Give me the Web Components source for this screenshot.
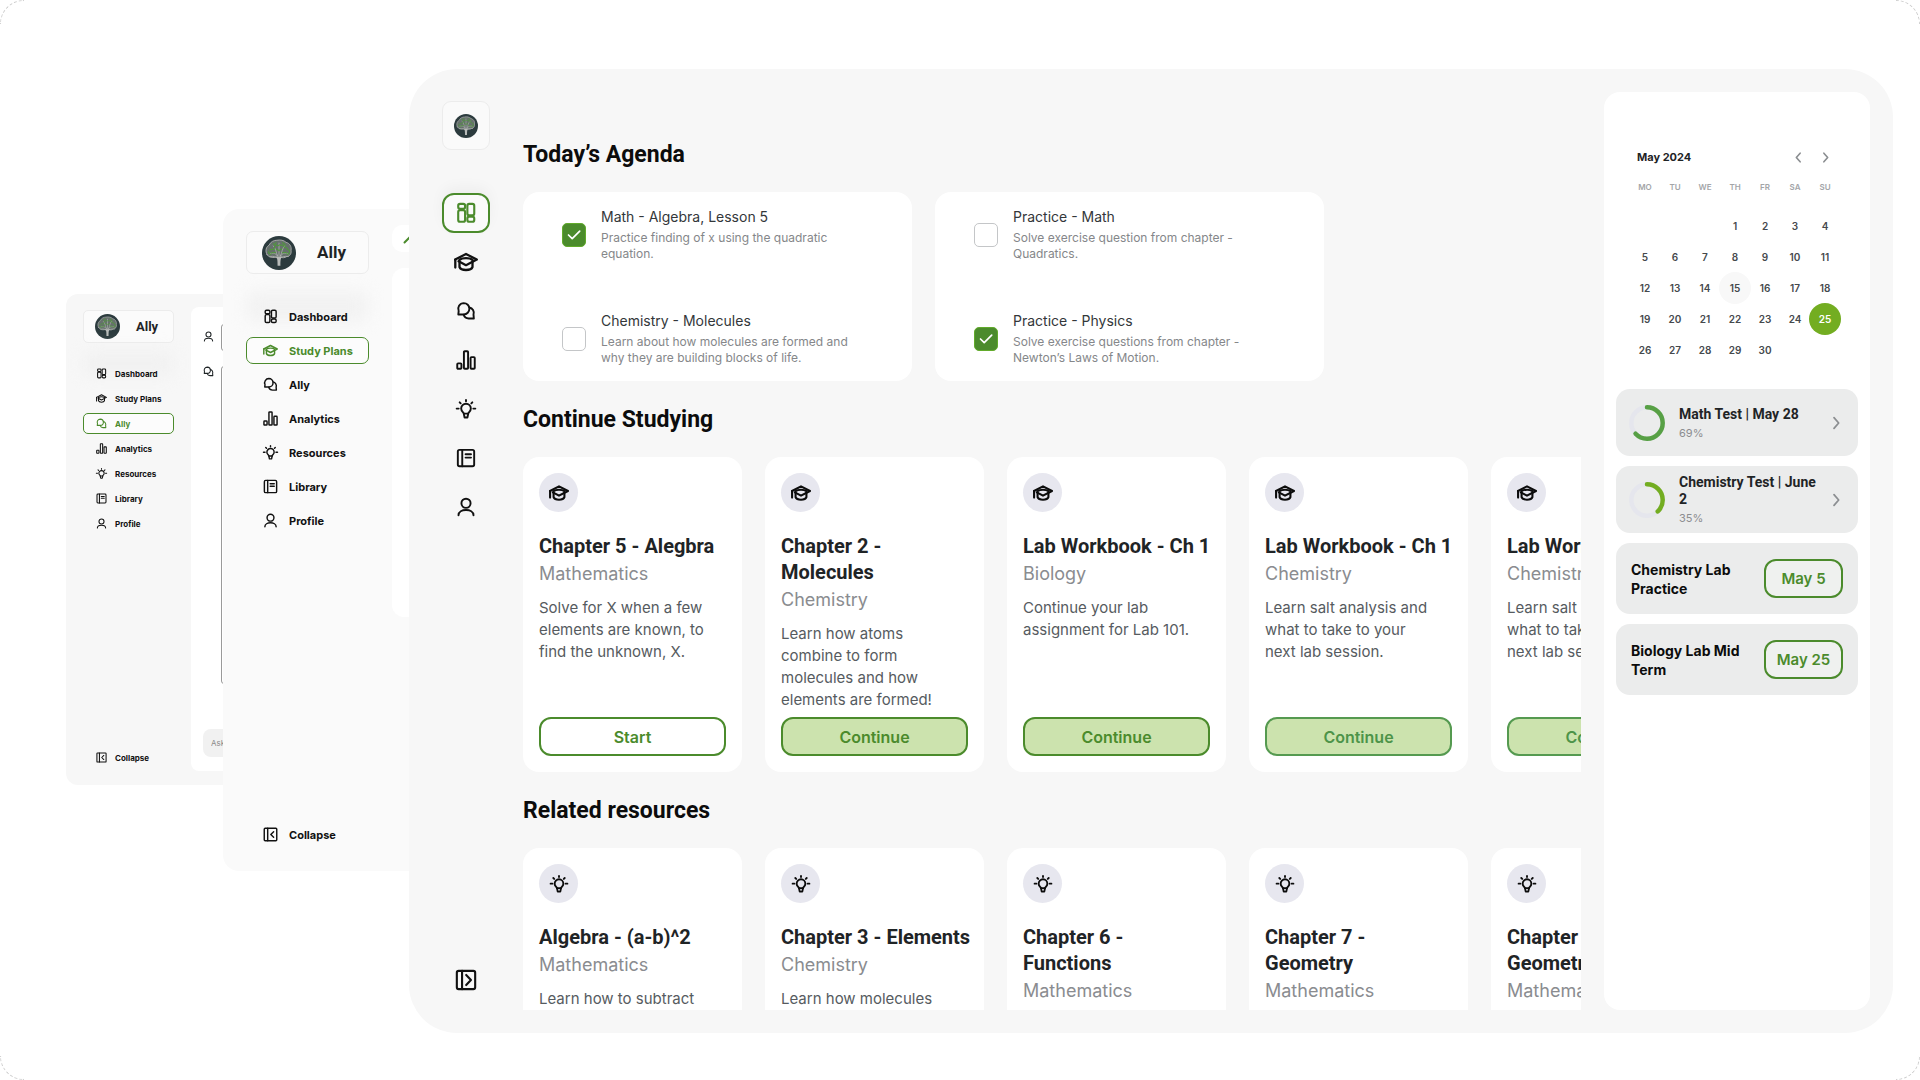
<!DOCTYPE html>
<html lang="en">
<head>
<meta charset="utf-8">
<title>Ally – Study dashboard</title>
<style>
  :root {
    --green: #4b8b2c;
    --lime: #73ad21;
    --ink: #1f2426;
    --body: #565b60;
    --muted: #8a8c90;
    --surface: #f7f7f7;
    --display: Roboto, "Liberation Sans", sans-serif;
  }
  * { box-sizing: border-box; }
  html, body { margin: 0; height: 100%; background: #fff; }
  body { font-family: Inter, "Liberation Sans", sans-serif; color: var(--ink); }
</style>
</head>
<body>
<ally-stage>
  <chat-window slot="back"></chat-window>
  <plans-window slot="middle"></plans-window>
  <dashboard-window slot="front">
    <ally-section heading="Today’s Agenda">
      <agenda-card>
        <agenda-item checked><span slot="title">Math - Algebra, Lesson 5</span>Practice finding of x using the quadratic<br>equation.</agenda-item>
        <agenda-item><span slot="title">Chemistry - Molecules</span>Learn about how molecules are formed and<br>why they are building blocks of life.</agenda-item>
      </agenda-card>
      <agenda-card>
        <agenda-item><span slot="title">Practice - Math</span>Solve exercise question from chapter -<br>Quadratics.</agenda-item>
        <agenda-item checked><span slot="title">Practice - Physics</span>Solve exercise questions from chapter -<br>Newton’s Laws of Motion.</agenda-item>
      </agenda-card>
    </ally-section>
    <ally-section heading="Continue Studying">
      <study-card icon="cap" action="Start" plain><span slot="title">Chapter 5 - Alegbra</span><span slot="subject">Mathematics</span>Solve for X when a few<br>elements are known, to<br>find the unknown, X.</study-card>
      <study-card icon="cap" action="Continue"><span slot="title">Chapter 2 -<br>Molecules</span><span slot="subject">Chemistry</span>Learn how atoms<br>combine to form<br>molecules and how<br>elements are formed!</study-card>
      <study-card icon="cap" action="Continue"><span slot="title">Lab Workbook - Ch 1</span><span slot="subject">Biology</span>Continue your lab<br>assignment for Lab 101.</study-card>
      <study-card icon="cap" action="Continue" soft><span slot="title">Lab Workbook - Ch 1</span><span slot="subject">Chemistry</span>Learn salt analysis and<br>what to take to your<br>next lab session.</study-card>
      <study-card icon="cap" action="Continue" soft><span slot="title">Lab Workbook - Ch 1</span><span slot="subject">Chemistry</span>Learn salt analysis and<br>what to take to your<br>next lab session.</study-card>
    </ally-section>
    <ally-section heading="Related resources">
      <study-card icon="bulb"><span slot="title">Algebra - (a-b)^2</span><span slot="subject">Mathematics</span>Learn how to subtract</study-card>
      <study-card icon="bulb"><span slot="title">Chapter 3 - Elements</span><span slot="subject">Chemistry</span>Learn how molecules</study-card>
      <study-card icon="bulb"><span slot="title">Chapter 6 -<br>Functions</span><span slot="subject">Mathematics</span></study-card>
      <study-card icon="bulb"><span slot="title">Chapter 7 -<br>Geometry</span><span slot="subject">Mathematics</span></study-card>
      <study-card icon="bulb"><span slot="title">Chapter 7 -<br>Geometry</span><span slot="subject">Mathematics</span></study-card>
    </ally-section>
    <month-calendar slot="aside" month="May 2024" offset="3" days="30" today="15" selected="25"></month-calendar>
    <test-card slot="aside" percent="69%" sweep="63" tone="#57a045">Math Test | May 28</test-card>
    <test-card slot="aside" percent="35%" sweep="38" tone="#73ad21">Chemistry Test | June<br>2</test-card>
    <lab-card slot="aside" date="May 5">Chemistry Lab<br>Practice</lab-card>
    <lab-card slot="aside" date="May 25">Biology Lab Mid<br>Term</lab-card>
  </dashboard-window>
</ally-stage>

<script>
const ICONS = {
  grid: '<rect x="3.500" y="2" width="7.500" height="5.500" rx="2"/><rect x="3.500" y="9" width="7.500" height="12.500" rx="2"/><rect x="13.500" y="2" width="7.500" height="12.500" rx="2"/><rect x="13.500" y="16" width="7.500" height="5.500" rx="2"/>',
  cap: '<path d="M1.200 9.600 12 4l10.800 5.600L12 15.200 4.600 11.300"/><path d="M5.500 9.800c3-2.200 10-2.200 13 0V17c-1.500 4-11.500 4-13 0z"/><path d="M1.300 9.600V17.500"/>',
  chat: '<path d="M9.300 2.500a6.800 6.800 0 0 1 0 13.600H2.800l.4-4A6.800 6.800 0 0 1 9.300 2.500z"/><path d="M16 7.800a6.500 6.500 0 0 1 5 8.500l.4 4.700h-6.200a6.500 6.500 0 0 1-6-4.500"/>',
  bars: '<rect x="1.500" y="16" width="5" height="6.500" rx="1"/><rect x="9.500" y="1.500" width="5" height="21" rx="1"/><rect x="17.500" y="8.500" width="5" height="14" rx="1"/>',
  bulb: '<path d="M9.300 17.500c0-1.500-3.100-2.600-3.100-6a5.800 5.800 0 0 1 11.600 0c0 3.400-3.100 4.500-3.100 6z"/><path d="M9.300 17.500l1 4.700h3.400l1-4.700M12 1.200v1.600M4.400 4l1.200 1.200M19.600 4l-1.200 1.200M.8 11.500h2.400M20.800 11.500h2.400"/>',
  book: '<rect x="2.200" y="2.200" width="19.600" height="19.600" rx="2"/><path d="M7.500 2.200v19.600M11.500 7.500h6.500M11.500 11.500h6.500"/>',
  user: '<circle cx="12" cy="7.500" r="5.500"/><path d="M3 22c0-8.500 18-8.500 18 0"/>',
  fold: '<rect x="2" y="2" width="20" height="20" rx="1.500"/><path d="M7.500 2v20M17 7.500 12.500 12l4.500 4.500"/>',
  unfold: '<rect x="2" y="2" width="20" height="20" rx="2"/><path d="M7.700 2v20M12.200 6.500l5.200 5.500-5.200 5.500"/>',
  left: '<path d="M15 4 8 12l7 8"/>',
  right: '<path d="M9 4l7 8-7 8"/>'
};

/* Base class: fills an open shadow root with a component's markup and styles. */
class AllyElement extends HTMLElement {
  connectedCallback() {
    if (this.shadowRoot) return;
    const t = document.createElement('template');
    t.innerHTML = '<style>*{box-sizing:border-box}' + this.styles() + '</style>' + this.markup();
    this.attachShadow({ mode: 'open' }).append(t.content.cloneNode(true));
  }
  attr(n, d = '') { return this.getAttribute(n) ?? d; }
  styles() { return ':host{display:block}'; }
  markup() { return '<slot></slot>'; }
}

customElements.define('ally-icon', class extends AllyElement {
  styles() { return ':host{display:block;flex:none;width:24px;height:24px}svg{display:block;width:100%;height:100%;overflow:visible}'; }
  markup() {
    return `<svg viewBox="0 0 24 24" fill="none" stroke="currentColor" stroke-width="${this.attr('weight', '2.300')}" stroke-linecap="round" stroke-linejoin="round" aria-hidden="true">${ICONS[this.attr('name')]}</svg>`;
  }
});

/* Tree-shaped brain in a dark disc. */
customElements.define('ally-logo', class extends AllyElement {
  styles() { return ':host{display:block;flex:none}svg{display:block;width:100%;height:100%}'; }
  markup() {
    return `<svg viewBox="0 0 48 48" role="img" aria-label="Ally logo">
      <circle cx="24" cy="24" r="24" fill="#2c3b3e"/>
      <g fill="none" stroke-linecap="round" stroke-linejoin="round">
        <path d="M7 26c-3-5-1-11 3-13 2-5 7-7 11-7 5-1 10 0 13 3 5 1 8 6 7 11 1 5-2 9-6 9-3 2-6 2-8 1-3 1-6 1-8 0-5 1-10 0-12-4z" fill="#66706d" stroke="#a6a9a7" stroke-width="1.400"/>
        <path d="M24 30V10M23 30c-3-6-8-7-12-5M25 30c3-6 8-7 12-5M22 28c-3-5-2-11-6-14M26 28c3-5 2-11 6-14M20 30c-4-2-7-1-9-1M28 30c4-2 7-1 9-1" stroke="#b2b5b2" stroke-width="1.100"/>
        <path d="M11 20c2-3 4 1 6-2s-1-4 2-5 3 2 5 0 3 1 5 0 1 4 4 3 2 4 5 4M13 24c2-2 4 1 6-1M29 23c2 2 4-1 6 1M20 18c1 2 3 1 4 3 1-2 3-1 4-3M16 11c1 2 3 0 4-2M29 9c1 2 3 2 4 4M9 22c0 2 1 3 3 4M39 21c0 2-1 4-3 5" stroke="#4f9a3a" stroke-width="1.500"/>
      </g>
      <path d="M19 29c3 2 3 6 3 13h4c0-7 0-11 3-13-2 0-3 1-5 1s-3-1-5-1z" fill="#b9bcba"/>
    </svg>`;
  }
});

customElements.define('ally-stage', class extends AllyElement {
  styles() {
    return `:host{display:block;position:relative;height:100%;overflow:hidden;background:#fff}
    .edge{position:absolute;inset:0;display:grid;grid-template-columns:24px 24px;grid-template-rows:24px 24px;justify-content:space-between;align-content:space-between}
    i{border:0 dashed #cfcfcf}
    i:nth-child(1){border-width:1px 0 0 1px;border-top-left-radius:24px}
    i:nth-child(2){border-width:1px 1px 0 0;border-top-right-radius:24px}
    i:nth-child(3){border-width:0 0 1px 1px;border-bottom-left-radius:24px}
    i:nth-child(4){border-width:0 1px 1px 0;border-bottom-right-radius:24px}
    ::slotted(*){position:absolute}
    ::slotted([slot=back]){left:66px;top:294px;width:360px;height:491px}
    ::slotted([slot=middle]){left:223px;top:209px;width:240px;height:662px}
    ::slotted([slot=front]){left:409px;right:27px;top:69px;bottom:47px}`;
  }
  markup() { return '<div class="edge"><i></i><i></i><i></i><i></i></div><slot name="back"></slot><slot name="middle"></slot><slot name="front"></slot>'; }
});

/* Expanded navigation column; sizes come from the window that holds it. */
customElements.define('nav-column', class extends AllyElement {
  styles() {
    return `:host{display:flex;flex-direction:column;width:var(--nav-w);flex:none}
    .brand{display:flex;align-items:center;height:var(--brand-h);border:1px solid #ececec;border-radius:var(--r);background:#fbfbfb;padding-left:var(--brand-pad);gap:var(--brand-gap);font:700 var(--brand-fs)/1 var(--display);margin-bottom:var(--brand-mb);color:var(--ink)}
    ally-logo{width:var(--logo);height:var(--logo)}
    nav{display:flex;flex-direction:column;gap:var(--gap);flex:1;position:relative;z-index:0}
    a{display:flex;align-items:center;position:relative;height:var(--item-h);gap:var(--item-gap);padding-left:var(--item-pad);border:1px solid transparent;border-radius:var(--r);font-size:var(--fs);font-weight:700;color:#111;text-decoration:none}
    a:first-child::before{content:"";position:absolute;inset:-12px 0 8px;background:#ececec;opacity:.6;filter:blur(9px);z-index:-1}
    a.on{color:var(--green);border-color:var(--green);background:#fcfcfc}
    a:last-child{margin-top:auto}
    ally-icon{width:var(--icon);height:var(--icon)}`;
  }
  markup() {
    const items = [['grid', 'Dashboard'], ['cap', 'Study Plans'], ['chat', 'Ally'], ['bars', 'Analytics'], ['bulb', 'Resources'], ['book', 'Library'], ['user', 'Profile'], ['fold', 'Collapse']];
    return `<div class="brand"><ally-logo></ally-logo><span>Ally</span></div><nav>` +
      items.map(([i, l]) => `<a href="#${i}"${l === this.attr('active') ? ' class="on" aria-current="page"' : ''}><ally-icon name="${i}"></ally-icon><span>${l}</span></a>`).join('') + '</nav>';
  }
});

customElements.define('chat-window', class extends AllyElement {
  styles() {
    return `:host{display:flex;gap:17px;padding:13px 13px 14px 17px;border-radius:12px;background:var(--surface)}
    nav-column{margin:3px 0;--nav-w:91px;--brand-h:33px;--brand-pad:11px;--brand-gap:16px;--brand-fs:13px;--brand-mb:20px;--logo:25px;--r:5px;--gap:4px;--item-h:21px;--item-gap:8px;--item-pad:12px;--fs:8px;--icon:11px}
    main{flex:1;display:flex;flex-direction:column;background:#fff;border-radius:8px;padding:17px 0 14px 12px}
    .row{display:flex;gap:7px}
    .row+.row{margin-top:15px}
    ally-icon{width:11px;height:11px;margin-top:7px}
    .row+.row ally-icon{margin-top:0}
    .msg{flex:1;height:27px;border:1px solid #9a9a9a;border-radius:3px}
    .msg.long{height:318px}
    input{margin-top:auto;height:28px;border:0;border-radius:8px;background:#f1f1f1;padding:0 8px;font:8px Inter,sans-serif;color:#8a8a8a;width:100%}
    input::placeholder{color:#8a8a8a;opacity:1}`;
  }
  markup() {
    return `<nav-column active="Ally"></nav-column><main>
      <div class="row"><ally-icon name="user"></ally-icon><div class="msg"></div></div>
      <div class="row"><ally-icon name="chat"></ally-icon><div class="msg long"></div></div>
      <input type="text" aria-label="Ask Ally" placeholder="Ask"></main>`;
  }
});

customElements.define('plans-window', class extends AllyElement {
  styles() {
    return `:host{display:flex;gap:23px;padding:16px 0 23px 23px;border-radius:16px;background:#fafafa}
    nav-column{margin-top:6px;--nav-w:123px;--brand-h:43px;--brand-pad:15px;--brand-gap:21px;--brand-fs:17px;--brand-mb:29px;--logo:34px;--r:7px;--gap:7px;--item-h:27px;--item-gap:11px;--item-pad:16px;--fs:11px;--icon:15px}
    main{flex:1;display:flex;flex-direction:column;gap:16px}
    .tab{height:27px;border-radius:10px;background:#fff;padding:11px;color:var(--green)}
    .tab svg{display:block;width:12px;height:8px}
    .pane{height:349px;border-radius:12px;background:#fff}`;
  }
  markup() {
    return `<nav-column active="Study Plans"></nav-column><main><div class="tab"><svg viewBox="0 0 12 8" fill="none" stroke="currentColor" stroke-width="2" stroke-linecap="round"><path d="M1.500 6.500 6 2l4.500 4.500"/></svg></div><div class="pane"></div></main>`;
  }
});

customElements.define('dashboard-window', class extends AllyElement {
  styles() {
    return `:host{display:flex;padding:23px 23px 23px 33px;border-radius:48px;background:var(--surface)}
    .rail{display:flex;flex-direction:column;width:48px;flex:none;padding:9px 0 10px}
    .brand{display:grid;place-items:center;height:49px;border:1px solid #ececec;border-radius:9px;background:#fafafa;margin-bottom:43px}
    ally-logo{width:24px;height:24px}
    nav{display:flex;flex-direction:column;gap:9px;flex:1}
    a{display:grid;place-items:center;height:40px;color:#111;border-radius:12px}
    a.on{color:var(--green);border:2px solid var(--green);background:#fafafa;box-shadow:0 -6px 14px #0000000a}
    a:last-child{margin-top:auto}
    ally-icon{width:20px;height:20px}
    ally-icon[name=cap]{width:24px;height:24px}
    ally-icon[name=grid],ally-icon[name=unfold]{width:22px;height:22px}
    main{flex:1;min-width:0;overflow:hidden;margin:0 23px 0 33px;padding-top:47px;display:flex;flex-direction:column;gap:23px}
    aside{width:266px;flex:none;border-radius:16px;background:#fff;padding:52px 12px;display:flex;flex-direction:column;gap:10px}`;
  }
  markup() {
    const items = [['grid', 'Dashboard'], ['cap', 'Study Plans'], ['chat', 'Ally'], ['bars', 'Analytics'], ['bulb', 'Resources'], ['book', 'Library'], ['user', 'Profile'], ['unfold', 'Expand']];
    return `<div class="rail"><div class="brand"><ally-logo></ally-logo></div><nav>` +
      items.map(([i, l], n) => `<a href="#${i}" aria-label="${l}"${n ? '' : ' class="on" aria-current="page"'}><ally-icon name="${i}"></ally-icon></a>`).join('') +
      `</nav></div><main><slot></slot></main><aside><slot name="aside"></slot></aside>`;
  }
});

customElements.define('ally-section', class extends AllyElement {
  styles() {
    return `:host{display:block;flex:none}
    h2{margin:0 0 21px;font:700 23px/32px var(--display);color:#0c0c0c}
    .row{display:flex;gap:23px}`;
  }
  markup() { return `<h2>${this.attr('heading')}</h2><div class="row"><slot></slot></div>`; }
});

customElements.define('agenda-card', class extends AllyElement {
  styles() { return ':host{display:flex;flex-direction:column;justify-content:space-between;flex:none;width:389px;height:189px;padding:15px 39px;border-radius:16px;background:#fff}'; }
});

customElements.define('agenda-item', class extends AllyElement {
  styles() {
    return `:host{display:block}
    label{display:flex;align-items:center;gap:15px;white-space:nowrap}
    input{appearance:none;flex:none;width:24px;height:24px;margin:0;border:1px solid #c4c6c8;border-radius:5px;background:#fff}
    input:checked{border-color:#62ab2b;background:var(--green) url("data:image/svg+xml,%3Csvg xmlns='http://www.w3.org/2000/svg' viewBox='0 0 24 24' fill='none' stroke='white' stroke-width='1.7' stroke-linecap='round' stroke-linejoin='round'%3E%3Cpath d='M6.500 12l3.700 3.700 7.500-7.500'/%3E%3C/svg%3E") center/24px}
    b{display:block;font-weight:400;font-size:14px;line-height:20px;color:#33373a;margin-bottom:3px}
    p{margin:0;font-size:12px;line-height:16px;color:#85878a}`;
  }
  markup() { return `<label><input type="checkbox"${this.hasAttribute('checked') ? ' checked' : ''}><span><b><slot name="title"></slot></b><p><slot></slot></p></span></label>`; }
});

customElements.define('study-card', class extends AllyElement {
  styles() {
    return `:host{display:flex;flex-direction:column;flex:none;width:219px;height:315px;padding:16px;border-radius:16px;background:#fff;white-space:nowrap}
    .badge{display:grid;place-items:center;width:39px;height:39px;border-radius:50%;background:#e7e7ef;color:#0c0c0c;margin-bottom:21px}
    ally-icon{width:20px;height:20px}
    ally-icon[name=bulb]{width:18px;height:18px}
    h3{margin:0 0 3px;font:700 20px/26px var(--display);color:var(--ink)}
    h4{margin:0 0 11px;font-weight:400;font-size:18px;line-height:24px;color:var(--muted)}
    p{margin:0;flex:1;font-size:15px;line-height:22px;color:var(--body)}
    button{flex:none;height:39px;border:2px solid var(--green);border-radius:12px;background:#cce3ae;color:var(--green);font:600 16px Inter,sans-serif;padding:0}
    :host([plain]) button{background:#fff}
    :host([soft]) button{border-color:#559a50;color:#4d9449}`;
  }
  markup() {
    return `<div class="badge"><ally-icon name="${this.attr('icon')}" weight="2.500"></ally-icon></div><h3><slot name="title"></slot></h3><h4><slot name="subject"></slot></h4><p><slot></slot></p>` +
      (this.hasAttribute('action') ? `<button type="button">${this.attr('action')}</button>` : '');
  }
});

customElements.define('month-calendar', class extends AllyElement {
  styles() {
    return `:host{display:block;margin-bottom:14px}
    header{display:flex;align-items:center;padding:0 26px 0 21px;height:26px}
    h2{margin:0;flex:1;font-size:11px;font-weight:700}
    button{display:block;border:0;background:none;padding:0;margin-left:14px;color:#8b8e91}
    ally-icon{width:13px;height:13px}
    table{border-collapse:collapse;table-layout:fixed;width:210px;margin-left:14px}
    th{height:34px;padding:0;font-size:8px;font-weight:600;color:#a3a5a8}
    td{height:31px;padding:0;font-size:10px;font-weight:600;color:#45494d;text-align:center}
    tbody::before{content:"";display:block;height:6px}
    td span{display:grid;place-items:center;height:32px;margin:-1px;border-radius:50%}
    .today{background:#f8f8f8}
    .selected{background:var(--lime);color:#fff}`;
  }
  markup() {
    const off = +this.attr('offset'), days = +this.attr('days');
    let rows = '';
    for (let r = 0; r * 7 < off + days; r++) {
      rows += '<tr>';
      for (let c = 0; c < 7; c++) {
        const d = r * 7 + c - off + 1;
        const cls = d == this.attr('today') ? 'today' : d == this.attr('selected') ? 'selected' : '';
        rows += d > 0 && d <= days ? `<td><span class="${cls}">${d}</span></td>` : '<td></td>';
      }
      rows += '</tr>';
    }
    return `<header><h2>${this.attr('month')}</h2><button type="button" aria-label="Previous month"><ally-icon name="left" weight="3"></ally-icon></button><button type="button" aria-label="Next month"><ally-icon name="right" weight="3"></ally-icon></button></header>
      <table><thead><tr>${['MO', 'TU', 'WE', 'TH', 'FR', 'SA', 'SU'].map(d => `<th>${d}</th>`).join('')}</tr></thead><tbody>${rows}</tbody></table>`;
  }
});

customElements.define('test-card', class extends AllyElement {
  styles() {
    return `:host{display:flex;align-items:center;height:67px;padding:0 14px 0 13px;border-radius:14px;background:#ebecec}
    svg{flex:none;width:36px;height:36px;margin-right:14px}
    div{flex:1;white-space:nowrap}
    h3{margin:0 0 3px;font:700 14px/17px var(--display);color:var(--ink)}
    p{margin:0;font-size:11px;line-height:14px;color:#8b8d90}
    ally-icon{width:16px;height:16px;color:#8b8e91}`;
  }
  markup() {
    return `<svg viewBox="0 0 36 36" fill="none" stroke-width="4.500" stroke-linecap="round" role="img" aria-label="${this.attr('percent')}"><circle cx="18" cy="18" r="15.700" stroke="#e5e6ed"/><circle cx="18" cy="18" r="15.700" stroke="${this.attr('tone')}" pathLength="100" stroke-dasharray="${this.attr('sweep')} 100" transform="rotate(-90 18 18)"/></svg>
      <div><h3><slot></slot></h3><p>${this.attr('percent')}</p></div><ally-icon name="right" weight="2.600"></ally-icon>`;
  }
});

customElements.define('lab-card', class extends AllyElement {
  styles() {
    return `:host{display:flex;align-items:center;justify-content:space-between;height:71px;padding:0 15px;border-radius:14px;background:#ebecec}
    h3{margin:0;font-size:14px;line-height:19px;font-weight:700;color:#0c0c0c;white-space:nowrap}
    button{width:79px;height:39px;padding:0;border:2px solid var(--green);border-radius:12px;background:#eff1ef;color:var(--green);font:600 15px Inter,sans-serif}`;
  }
  markup() { return `<h3><slot></slot></h3><button type="button">${this.attr('date')}</button>`; }
});
</script>
</body>
</html>
